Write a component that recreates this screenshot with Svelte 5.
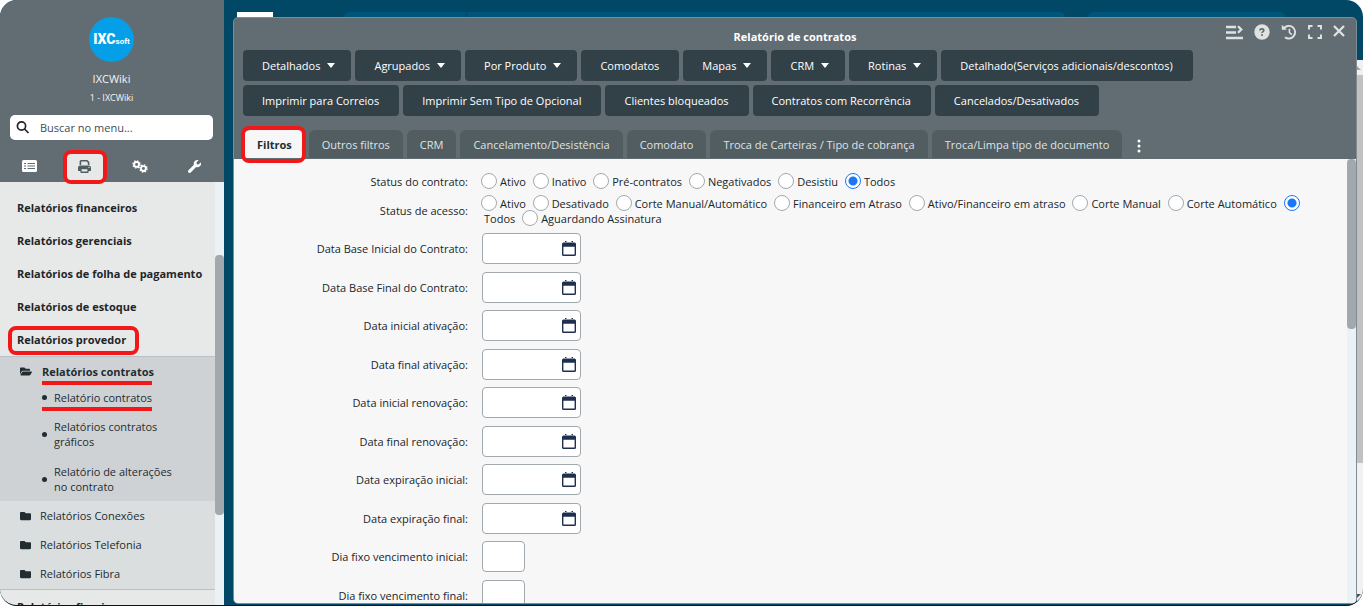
<script>
  const sections = ['Relatórios financeiros', 'Relatórios gerenciais', 'Relatórios de folha de pagamento', 'Relatórios de estoque'];
  const folders = ['Relatórios Conexões', 'Relatórios Telefonia', 'Relatórios Fibra'];

  const actionRows = [
    [
      { text: 'Detalhados', menu: true },
      { text: 'Agrupados', menu: true },
      { text: 'Por Produto', menu: true },
      { text: 'Comodatos' },
      { text: 'Mapas', menu: true },
      { text: 'CRM', menu: true },
      { text: 'Rotinas', menu: true },
      { text: 'Detalhado(Serviços adicionais/descontos)' }
    ],
    [
      { text: 'Imprimir para Correios' },
      { text: 'Imprimir Sem Tipo de Opcional' },
      { text: 'Clientes bloqueados' },
      { text: 'Contratos com Recorrência' },
      { text: 'Cancelados/Desativados' }
    ]
  ];

  const tabs = [
    'Filtros',
    'Outros filtros',
    'CRM',
    'Cancelamento/Desistência',
    'Comodato',
    'Troca de Carteiras / Tipo de cobrança',
    'Troca/Limpa tipo de documento'
  ];

  const contractStatus = ['Ativo', 'Inativo', 'Pré-contratos', 'Negativados', 'Desistiu', 'Todos'];
  const accessStatus = [
    'Ativo',
    'Desativado',
    'Corte Manual/Automático',
    'Financeiro em Atraso',
    'Ativo/Financeiro em atraso',
    'Corte Manual',
    'Corte Automático',
    'Todos',
    'Aguardando Assinatura'
  ];

  const fields = [
    { id: 'base-inicial', label: 'Data Base Inicial do Contrato:', date: true },
    { id: 'base-final', label: 'Data Base Final do Contrato:', date: true },
    { id: 'ativacao-inicial', label: 'Data inicial ativação:', date: true },
    { id: 'ativacao-final', label: 'Data final ativação:', date: true },
    { id: 'renovacao-inicial', label: 'Data inicial renovação:', date: true },
    { id: 'renovacao-final', label: 'Data final renovação:', date: true },
    { id: 'expiracao-inicial', label: 'Data expiração inicial:', date: true },
    { id: 'expiracao-final', label: 'Data expiração final:', date: true },
    { id: 'vencimento-inicial', label: 'Dia fixo vencimento inicial:', date: false },
    { id: 'vencimento-final', label: 'Dia fixo vencimento final:', date: false }
  ];

  let activeTab = $state('Filtros');
  let contract = $state('Todos');
  let access = $state('Todos');
</script>

<div class="app">
  <aside class="sidebar">
    <header class="profile">
      <div class="logo"><b>IXC</b><span>soft</span></div>
      <div class="user">IXCWiki</div>
      <div class="company">1 - IXCWiki</div>
      <div class="search">
        <svg width="14" height="14" viewBox="0 0 14 14" fill="none" stroke="#212529" stroke-width="1.7">
          <circle cx="5.5" cy="5" r="4.1" />
          <path d="M8.5 8L12.5 12" />
        </svg>
        <input type="text" placeholder="Buscar no menu..." aria-label="Buscar no menu" />
      </div>
      <div class="modes">
        <button aria-label="Lista">
          <svg width="15" height="12" viewBox="0 0 15 12">
            <rect width="15" height="12" rx="1.5" fill="#fff" />
            <path d="M2 3.5h2M2 6h2M2 8.5h2M5.5 3.5h7.5M5.5 6h7.5M5.5 8.5h7.5" stroke="#616d72" stroke-width="1.2" />
          </svg>
        </button>
        <button class="current" aria-label="Relatórios">
          <svg width="13" height="13" viewBox="0 0 13 13" fill="#505c61">
            <path d="M1.6 5V1.5A1.5 1.5 0 0 1 3.1 0h6.2l2.1 2.1V5H9.8V2.8L8.6 1.6H3.2V5z" />
            <path d="M2.2 5.6h8.6A2.2 2.2 0 0 1 13 7.8v2.7a.6.6 0 0 1-.6.6H.6a.6.6 0 0 1-.6-.6V7.8a2.2 2.2 0 0 1 2.2-2.2z" />
            <path d="M2.4 8.3h8.2v3.7a1 1 0 0 1-1 1H3.4a1 1 0 0 1-1-1z" />
            <path d="M3.6 9.2h5.8v2.3H3.6z" fill="#e7e9e8" />
            <circle cx="11" cy="7.4" r=".6" fill="#e7e9e8" />
          </svg>
        </button>
        <button aria-label="Configurações">
          <svg width="16" height="13" viewBox="0 0 17 14" fill="none" stroke="#fff">
            <circle cx="4.8" cy="4.8" r="2.6" stroke-width="2" />
            <circle cx="4.8" cy="4.8" r="3.8" stroke-width="1.6" stroke-dasharray="1.492" />
            <circle cx="12.2" cy="9.2" r="2.6" stroke-width="2" />
            <circle cx="12.2" cy="9.2" r="3.8" stroke-width="1.6" stroke-dasharray="1.492" />
          </svg>
        </button>
        <button aria-label="Ferramentas">
          <svg width="13" height="13" viewBox="0 0 512 512" fill="#fff">
            <path d="M507.730 109.100c-2.240-9.030-13.540-12.090-20.120-5.510l-74.360 74.360-67.880-11.310-11.310-67.880 74.360-74.360c6.620-6.620 3.430-17.900-5.660-20.160-47.380-11.740-99.550.91-136.580 37.930-39.640 39.640-50.550 97.100-34.050 147.200L18.740 402.760c-24.990 24.990-24.990 65.510 0 90.500 24.990 24.990 65.510 24.990 90.500 0l213.210-213.210c50.120 16.710 107.470 5.680 147.370-34.220 37.070-37.070 49.700-89.320 37.910-136.730z" />
          </svg>
        </button>
      </div>
    </header>

    <div class="menu">
      <nav>
        {#each sections as section}
          <a class="section" href="#menu">{section}</a>
        {/each}
        <a class="section marked" href="#menu"><span>Relatórios provedor</span></a>

        <div class="group">
          <div class="open">
            <a class="folder bold" href="#menu">
              <svg width="12" height="11" viewBox="0 32 576 448" fill="#212d33">
                <path d="M572.694 292.093L500.270 416.248A63.997 63.997 0 0 1 444.989 448H45.025c-18.523 0-30.064-20.093-20.731-36.093l72.424-124.155A64 64 0 0 1 152 256h399.964c18.523 0 30.064 20.093 20.730 36.093zM152 224h328v-48c0-26.510-21.490-48-48-48H272l-64-64H48C21.490 64 0 85.490 0 112v278.046l69.077-118.418C86.214 242.250 117.989 224 152 224z" />
              </svg>
              <span class="underlined">Relatórios contratos</span>
            </a>
            <ul>
              <li class="underlined"><a href="#menu">Relatório contratos</a></li>
              <li><a href="#menu">Relatórios contratos gráficos</a></li>
              <li><a href="#menu">Relatório de alterações no contrato</a></li>
            </ul>
          </div>
          {#each folders as folder}
            <a class="folder" href="#menu">
              <svg width="11" height="10" viewBox="0 40 512 432" fill="#212d33">
                <path d="M464 128H272l-64-64H48C21.490 64 0 85.490 0 112v288c0 26.510 21.490 48 48 48h416c26.510 0 48-21.490 48-48V176c0-26.510-21.490-48-48-48z" />
              </svg>
              <span>{folder}</span>
            </a>
          {/each}
        </div>
        <a class="section" href="#menu">Relatórios fiscais</a>
      </nav>
      <div class="track"><div class="thumb"></div></div>
    </div>
  </aside>

  <main class="desktop">
    <div class="strip">
      <div class="strip-logo"></div>
      <div class="strip-menu"><i></i></div>
      <div class="strip-search"></div>
    </div>

    <div class="stage">
      <section class="window">
        <header class="titlebar">
          <h1>Relatório de contratos</h1>
          <div class="controls">
            <button aria-label="Recolher">
              <svg width="17" height="15" viewBox="0 0 17 15" fill="none" stroke="#dfe2e3" stroke-width="2.3">
                <path d="M0 2h10M0 7.5h10M0 13h17M12 1.2l3.3 3.3-3.3 3.3" />
              </svg>
            </button>
            <button aria-label="Ajuda">
              <svg width="16" height="16" viewBox="0 0 16 16">
                <circle cx="8" cy="8" r="7.7" fill="#dfe2e3" />
                <path d="M6 6.5c0-2.2 3.8-2.1 3.8-.1 0 1.3-1.8 1.2-1.8 2.6" fill="none" stroke="#616d72" stroke-width="1.6" />
                <circle cx="8" cy="11" r="1" fill="#616d72" />
              </svg>
            </button>
            <button aria-label="Histórico">
              <svg width="16" height="16" viewBox="0 0 16 16" fill="none" stroke="#dfe2e3" stroke-width="1.9">
                <path d="M2.6 4.7A6.3 6.3 0 1 1 4 13.2" />
                <path d="M8.4 4.8v3.7l2.4 2.1" stroke-width="1.6" />
                <path d="M.8.8v5h5z" fill="#dfe2e3" stroke="none" />
              </svg>
            </button>
            <button aria-label="Tela cheia">
              <svg width="14" height="14" viewBox="0 0 14 14" fill="none" stroke="#dfe2e3" stroke-width="2">
                <path d="M1 4.5V1h3.5M9.5 1H13v3.5M13 9.5V13H9.5M4.5 13H1V9.5" />
              </svg>
            </button>
            <button aria-label="Fechar">
              <svg width="12" height="14" viewBox="0 0 12 14" fill="none" stroke="#dfe2e3" stroke-width="2.3">
                <path d="M1 1l10 10M11 1L1 11" />
              </svg>
            </button>
          </div>
        </header>

        <div class="actions">
          {#each actionRows as row}
            <div class="action-row">
              {#each row as action}
                <button class:dropdown={action.menu}>
                  {action.text}
                  {#if action.menu}<i class="caret"></i>{/if}
                </button>
              {/each}
            </div>
          {/each}
        </div>

        <div class="tabs">
          {#each tabs as tab}
            <button class:active={activeTab === tab} onclick={() => (activeTab = tab)}>{tab}</button>
          {/each}
          <button class="more" aria-label="Mais abas">
            <svg width="4" height="14" viewBox="0 0 4 14" fill="#fff">
              <circle cx="2" cy="2" r="1.5" />
              <circle cx="2" cy="7" r="1.5" />
              <circle cx="2" cy="12" r="1.5" />
            </svg>
          </button>
        </div>

        <div class="content">
          <form>
            <span class="label">Status do contrato:</span>
            <div class="options">
              {#each contractStatus as option}
                <label><input type="radio" name="contract" value={option} bind:group={contract} /><span>{option}</span></label>{' '}
              {/each}
            </div>
            <span class="label">Status de acesso:</span>
            <div class="options">
              {#each accessStatus as option}
                <label><input type="radio" name="access" value={option} bind:group={access} /><span>{option}</span></label>{' '}
              {/each}
            </div>
            {#each fields as field}
              <label class="label" for={field.id}>{field.label}</label>
              <div class="field" class:date={field.date}>
                <input id={field.id} type="text" />
                {#if field.date}
                  <button type="button" aria-label="Abrir calendário">
                    <svg width="14" height="15" viewBox="0 0 14 15" fill="#1e2f50">
                      <path d="M3 0h1.5v2H3zM9.5 0H11v2H9.5zM1.5 1.5h11A1.5 1.5 0 0 1 14 3v10.5a1.5 1.5 0 0 1-1.5 1.5h-11A1.5 1.5 0 0 1 0 13.5V3a1.5 1.5 0 0 1 1.5-1.5zM1.4 5.8v7.7h11.2V5.8z" fill-rule="evenodd" />
                    </svg>
                  </button>
                {/if}
              </div>
            {/each}
          </form>
          <div class="track"><div class="thumb"></div></div>
        </div>
      </section>

      <div class="page-scroll">
        <i class="up"></i>
        <div class="page-thumb"></div>
        <i class="down"></i>
      </div>
    </div>
  </main>
</div>

<style>
  :global(body) {
    background: #fff;
  }

  .app {
    box-sizing: border-box;
    display: grid;
    grid-template-columns: 224px 1fr;
    height: 100vh;
    overflow: hidden;
    border-bottom: 1px solid #111;
    border-radius: 17px;
    background: #004866;
    color: #212529;
    font-family: 'Open Sans', 'Noto Sans', sans-serif;
    font-size: 11px;
    line-height: 15px;
  }

  button {
    display: flex;
    align-items: center;
    justify-content: center;
    padding: 0;
    border: none;
    background: none;
    font: inherit;
    color: inherit;
    white-space: nowrap;
    cursor: pointer;
  }

  a {
    color: inherit;
    text-decoration: none;
  }

  svg {
    display: block;
    flex: none;
  }

  /* Sidebar */
  .sidebar {
    display: flex;
    flex-direction: column;
    min-height: 0;
  }

  .profile {
    flex: none;
    display: flex;
    flex-direction: column;
    align-items: center;
    padding: 17px 1px 0 0;
    background: #616d72;
    color: #f4f5f5;
  }

  .logo {
    display: flex;
    align-items: baseline;
    justify-content: center;
    width: 45px;
    height: 45px;
    border-radius: 50%;
    background: #049fe6;
    color: #fff;
    font-family: Roboto, sans-serif;
    line-height: 45px;
  }

  .logo b {
    font-size: 14px;
    font-weight: 900;
  }

  .logo span {
    font-size: 8px;
    font-weight: 700;
  }

  .user {
    margin-top: 9px;
    font-weight: 500;
  }

  .company {
    margin-top: 4px;
    font-size: 9px;
  }

  .search {
    box-sizing: border-box;
    align-self: stretch;
    display: flex;
    align-items: center;
    gap: 10px;
    height: 25px;
    margin: 10px 10px 0;
    padding: 0 6px;
    border-radius: 5px;
    background: #fff;
  }

  .search input {
    flex: 1;
    min-width: 0;
    padding: 0;
    border: none;
    outline: none;
    font: inherit;
  }

  .search input::placeholder {
    color: #444c51;
  }

  .modes {
    align-self: stretch;
    display: grid;
    grid-template-columns: repeat(4, 1fr);
    margin-top: 10px;
    padding: 0 1px 0 2px;
  }

  .modes button {
    height: 32px;
  }

  .modes .current {
    position: relative;
  }

  .modes .current svg {
    z-index: 1;
  }

  .modes .current::after {
    content: '';
    position: absolute;
    inset: 0 5px -2px 6px;
    border: 4px solid #f01818;
    border-radius: 8px;
    background: #e7e9e8;
  }

  .menu {
    flex: 1;
    display: flex;
    min-height: 0;
  }

  nav {
    flex: 1;
    padding-top: 9px;
    overflow: hidden;
    background: #e7e9e8;
  }

  .section {
    display: block;
    padding-left: 17px;
    font-weight: 700;
    line-height: 33px;
  }

  .marked {
    position: relative;
  }

  .marked::after {
    content: '';
    position: absolute;
    inset: 3px 76px 1px 8px;
    border: 4px solid #f01818;
    border-radius: 8px;
  }

  .group {
    padding-bottom: 1px;
    border: solid #b9c1c6;
    border-width: 1px 0;
    background: #dadedf;
    color: #212d33;
  }

  .open {
    padding-bottom: 7px;
    background: #cfd2d5;
  }

  .folder {
    display: flex;
    align-items: center;
    gap: 9px;
    height: 29px;
    padding-left: 20px;
  }

  .bold {
    gap: 10px;
    font-weight: 700;
  }

  .underlined {
    position: relative;
  }

  .underlined::after {
    content: '';
    position: absolute;
    left: 0;
    top: 17px;
    width: 110px;
    height: 4px;
    background: #f01818;
  }

  ul {
    display: flex;
    flex-direction: column;
    gap: 15px;
    margin: 4px 36px 0 42px;
    padding: 0;
    list-style: none;
  }

  li {
    display: flex;
    align-items: center;
    gap: 7px;
  }

  li:first-child {
    margin-bottom: -1px;
  }

  li::before {
    content: '';
    flex: none;
    width: 5px;
    height: 5px;
    border-radius: 50%;
    background: #212d33;
  }

  .track {
    flex: none;
    width: 9px;
    background: #eaf2f6;
  }

  .thumb {
    height: 170px;
    border-radius: 4px;
    background: #a1a9af;
  }

  .menu .thumb {
    height: 260px;
    margin-top: 73px;
  }

  /* Desktop */
  .desktop {
    display: flex;
    flex-direction: column;
    min-width: 0;
    min-height: 0;
    padding-bottom: 1px;
  }

  .strip {
    display: flex;
    height: 5px;
    padding: 12px 78px 0 13px;
  }

  .strip-logo {
    width: 36px;
    background: #fff;
  }

  .strip-menu {
    flex: 1;
    margin: 0 23px 0 71px;
    border-radius: 16px 16px 0 0;
    background: #00557a;
  }

  .strip-menu i {
    display: block;
    width: 1px;
    height: 5px;
    margin-left: 122px;
    background: #004866;
  }

  .strip-search {
    width: 197px;
    border-radius: 16px 16px 0 0;
    background: #00557a;
  }

  .stage {
    flex: 1;
    display: flex;
    min-height: 0;
    padding-left: 9px;
  }

  .window {
    flex: 1;
    display: flex;
    flex-direction: column;
    min-width: 0;
    border: 1px solid #7d8c95;
    border-radius: 5px;
    overflow: hidden;
    background: #616d72;
  }

  .titlebar {
    position: relative;
    padding: 11px 0 6px;
    color: #fff;
  }

  h1 {
    margin: 0;
    font-size: 11px;
    line-height: 15px;
    text-align: center;
  }

  .controls {
    position: absolute;
    top: 6px;
    right: 11px;
    display: flex;
    align-items: center;
    gap: 11px;
    height: 16px;
  }

  .actions {
    display: flex;
    flex-direction: column;
    gap: 4px;
    padding-left: 9px;
  }

  .action-row {
    display: flex;
    gap: 4px;
  }

  .actions button {
    gap: 7px;
    height: 31px;
    padding: 0 20px 0 19px;
    border-radius: 4px;
    background: #324148;
    color: #fff;
    font-weight: 500;
  }

  .actions .dropdown {
    padding-right: 16px;
  }

  .caret {
    border: 4px solid transparent;
    border-top: 5px solid #fff;
    border-bottom: 0;
  }

  .tabs {
    display: flex;
    gap: 4px;
    margin-top: 14px;
    padding: 0 0 1px 10px;
  }

  .tabs button {
    height: 28px;
    padding: 0 13px;
    border-radius: 6px 6px 0 0;
    background: #525d62;
    color: #dfe3e4;
  }

  .tabs .active {
    position: relative;
    background: #f7f7f7;
    color: #212d33;
    font-weight: 700;
  }

  .tabs .active::after {
    content: '';
    position: absolute;
    inset: -4px -1px -5px -3px;
    border: 4px solid #f01818;
    border-radius: 8px;
  }

  .tabs .more {
    padding: 4px 11px 0;
    background: none;
  }

  .content {
    flex: 1;
    display: flex;
    min-height: 0;
    background: #f7f7f7;
  }

  form {
    flex: 1;
    display: grid;
    grid-template-columns: 234px 1fr;
    grid-template-rows: 22px 37px;
    grid-auto-rows: 39px 38px;
    column-gap: 14px;
    align-items: center;
    padding: 11px 40px 0 0;
    overflow: hidden;
  }

  .label {
    text-align: right;
  }

  .options {
    margin-left: -1px;
  }

  .options label {
    margin-right: 4px;
  }

  .options span {
    margin-left: 3px;
  }

  input[type='radio'] {
    appearance: none;
    box-sizing: border-box;
    width: 16px;
    height: 16px;
    margin: -5px 0 -2px;
    border: 1px solid #a1a9af;
    border-radius: 50%;
    background: #fff;
    vertical-align: middle;
  }

  input[type='radio']:checked {
    border-color: #1a78f5;
    background: radial-gradient(#1a78f5 4px, #fff 5px);
  }

  .field {
    position: relative;
    width: 43px;
  }

  .date {
    width: 99px;
  }

  .field input {
    display: block;
    box-sizing: border-box;
    width: 100%;
    height: 31px;
    padding: 0 6px;
    border: 1px solid #a1a9af;
    border-radius: 4px;
    background: #fff;
    font: inherit;
  }

  .field button {
    position: absolute;
    top: 8px;
    right: 5px;
  }

  .page-scroll {
    display: flex;
    flex-direction: column;
    width: 6px;
    margin-top: 43px;
    background: #f1f1f1;
    overflow: hidden;
  }

  .page-thumb {
    height: 388px;
    background: #c1c1c1;
  }

  .up,
  .down {
    width: 0;
    border: 4px solid transparent;
  }

  .up {
    margin: 2px 0 5px -4px;
    border-bottom-color: #a3a3a3;
  }

  .down {
    margin: auto 0 6px -4px;
    border-top-color: #505050;
    border-bottom: 0;
  }
</style>
